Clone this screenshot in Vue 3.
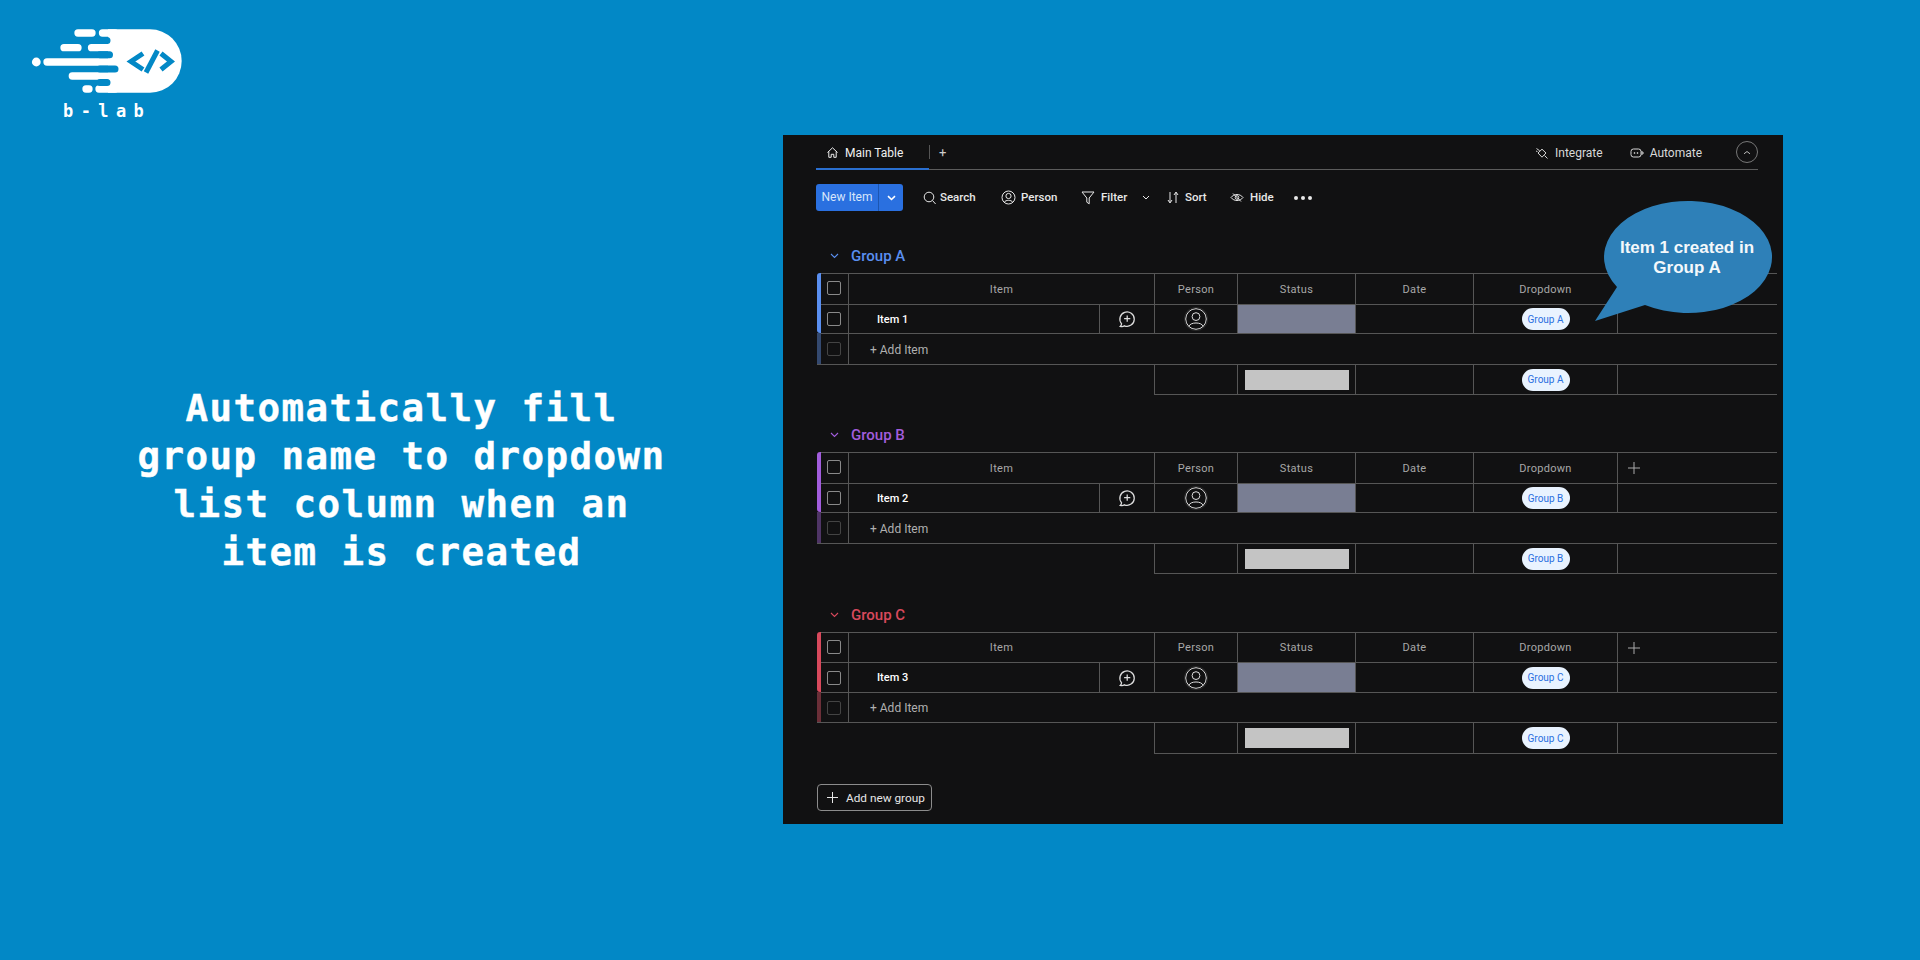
<script setup>
const groups = [
  { name: 'Group A', color: '#5a8ff0', dim: '#34496f', item: 'Item 1', showPlus: false, height: 179, rows: '31px 29px 31px 31px' },
  { name: 'Group B', color: '#a25ddc', dim: '#4f3566', item: 'Item 2', showPlus: true, height: 180, rows: '31px 29px 31px 31px' },
  { name: 'Group C', color: '#d8495c', dim: '#6b2f38', item: 'Item 3', showPlus: true, height: 179, rows: '30px 30px 30px 32px' },
]
const tools = [
  { label: 'Search', icon: 'search', width: 78, gap: 4 },
  { label: 'Person', icon: 'person', width: 80, gap: 5 },
  { label: 'Filter', icon: 'filter', width: 86, gap: 6 },
  { label: 'Sort', icon: 'sort', width: 63, gap: 6 },
  { label: 'Hide', icon: 'hide', width: 64, gap: 6 },
]
</script>

<template>
  <div class="page">
    <div class="left">
      <div class="logo">
        <svg class="logo-mark" width="190" height="100" viewBox="0 0 190 100">
          <path d="M108 29.3H150A31.7 31.7 0 0 1 150 92.7H108Z" fill="#fff" />
          <g stroke="#fff" stroke-width="7.3" stroke-linecap="round" fill="none">
            <path d="M78 33H92M102.5 33H115M64 47.7H78M91.5 47.7H112M47 62H115M72.3 76H115M86 89H89M99 89H115" />
          </g>
          <circle cx="36.3" cy="62" r="4.4" fill="#fff" />
          <g stroke="#0288c6" stroke-width="7" stroke-linecap="round" fill="none">
            <path d="M100 40.4H107M100 54.8H109.5M100 69H115M100 82.6H107" />
          </g>
          <g stroke="#0288c6" stroke-width="5" fill="none">
            <path d="M143 53.5L131 61.5L143 69.5M161 53.5L171 61.5L161 69.5" />
            <path d="M146 72.5L157.5 50.5" />
          </g>
        </svg>
        <div class="logo-text">b-lab</div>
      </div>
      <h1 class="headline">Automatically fill<br />group name to dropdown<br />list column when an<br />item is created</h1>
    </div>

    <div class="panel">
      <div class="tabs">
        <div class="tab">
          <svg class="ic" width="13" height="13" viewBox="0 0 13 13"><path d="M1.5 6.5L6.5 1.8L11.5 6.5M2.8 5.5V11.3H5.2V8.3H7.8V11.3H10.2V5.5" /></svg>
          <span>Main Table</span>
        </div>
        <span class="tab-sep"></span>
        <span class="tab-plus">+</span>
        <div class="tabs-right">
          <span class="tab-link">
            <svg class="ic" width="14" height="14" viewBox="0 0 14 14"><path d="M3 7L7 3.2L11 7L7 11.2ZM1.5 2.5L4.7 4.8M9.5 9.5L12.5 12.5M1 5L2.5 5.6" /></svg>
            Integrate
          </span>
          <span class="tab-link">
            <svg class="ic" width="15" height="14" viewBox="0 0 15 14"><rect x="2" y="3" width="10" height="8" rx="2.4" /><path d="M12 6H14V8H12" /><circle cx="5.5" cy="7" r=".5" /><circle cx="8.5" cy="7" r=".5" /></svg>
            Automate
          </span>
          <span class="collapse">
            <svg class="ic" width="8" height="5" viewBox="0 0 8 5"><path d="M1 3.8L4 1.5L7 3.8" /></svg>
          </span>
        </div>
      </div>

      <div class="toolbar">
        <div class="new-item">
          <span class="new-label">New Item</span>
          <span class="new-arrow">
            <svg width="9" height="6" viewBox="0 0 9 6"><path d="M1 1.2L4.5 4.5L8 1.2" fill="none" stroke="#fff" stroke-width="1.6" /></svg>
          </span>
        </div>
        <div class="tools">
          <div v-for="t in tools" :key="t.label" class="tool" :style="{ width: t.width + 'px', gap: t.gap + 'px' }">
            <svg v-if="t.icon === 'search'" class="ic" width="13" height="14" viewBox="0 0 13 14"><circle cx="6" cy="6" r="4.8" /><path d="M9.5 9.5L12.6 13" /></svg>
            <svg v-else-if="t.icon === 'person'" class="ic" width="15" height="15" viewBox="0 0 15 15"><circle cx="7.5" cy="7.5" r="6.5" /><circle cx="7.5" cy="6" r="2.6" /><path d="M3.5 12C4.5 9.8 10.5 9.8 11.5 12" /></svg>
            <svg v-else-if="t.icon === 'filter'" class="ic" width="14" height="14" viewBox="0 0 14 14"><path d="M1 1H13L8.2 7V12.8L5.8 11.2V7Z" /></svg>
            <svg v-else-if="t.icon === 'sort'" class="ic" width="12" height="13" viewBox="0 0 12 13"><path d="M3 1V11M1 9L3 12L5 9M9 12V2M7 4L9 1L11 4" /></svg>
            <svg v-else class="ic" width="14" height="13" viewBox="0 0 14 13"><path d="M1 6.5C4 2.5 10 2.5 13 6.5C10 10.5 4 10.5 1 6.5ZM3 2.5L11 10.5" /><circle cx="7" cy="6.5" r="1.8" /></svg>
            <span class="tool-label">{{ t.label }}</span>
            <svg v-if="t.icon === 'filter'" class="ic filter-chev" width="8" height="5" viewBox="0 0 8 5"><path d="M1 1L4 4L7 1" /></svg>
          </div>
          <div class="dots"><i></i><i></i><i></i></div>
        </div>
      </div>

      <section v-for="g in groups" :key="g.name" class="group" :style="{ height: g.height + 'px' }">
        <div class="group-head" :style="{ color: g.color }">
          <svg width="9" height="6" viewBox="0 0 9 6"><path d="M1 1L4.5 4.5L8 1" fill="none" stroke="currentColor" stroke-width="1.1" /></svg>
          <span>{{ g.name }}</span>
        </div>
        <div class="grid" :style="{ gridTemplateRows: g.rows }">
          <!-- header -->
          <div class="stripe stripe-top" :style="{ background: g.color }"></div>
          <div class="cell line"><span class="box box-up"></span></div>
          <div class="cell line lft head span-item">Item</div>
          <div class="cell line lft head">Person</div>
          <div class="cell line lft head">Status</div>
          <div class="cell line lft head">Date</div>
          <div class="cell line lft head">Dropdown</div>
          <div class="cell line lft head col-end"><span v-if="g.showPlus" class="col-plus">
            <svg class="ic" width="12" height="12" viewBox="0 0 12 12"><path d="M6 0V12M0 6H12" /></svg>
          </span></div>

          <!-- item -->
          <div class="stripe stripe-bottom" :style="{ background: g.color }"></div>
          <div class="cell line"><span class="box"></span></div>
          <div class="cell line lft item-name">{{ g.item }}</div>
          <div class="cell line lft">
            <svg class="ic comment" width="18" height="18" viewBox="0 0 18 18"><path d="M3.6 13.8A7.2 7.2 0 1 1 6.4 15.8C5.4 16.6 3.4 16.8 2.2 16.4C3.2 15.6 3.6 14.8 3.6 13.8Z" /><path d="M9.2 5.6V11.8M6.1 8.7H12.3" /></svg>
          </div>
          <div class="cell line lft">
            <span class="avatar-ring">
              <svg class="ic avatar" width="22" height="22" viewBox="0 0 22 22"><circle cx="11" cy="11" r="10.3" /><circle cx="11" cy="8.6" r="3.9" /><path d="M3.8 18.5C5 13.8 17 13.8 18.2 18.5" /></svg>
            </span>
          </div>
          <div class="cell line lft status"></div>
          <div class="cell line lft"></div>
          <div class="cell line lft"><span class="pill">{{ g.name }}</span></div>
          <div class="cell line lft"></div>

          <!-- add item -->
          <div class="stripe" :style="{ background: g.dim }"></div>
          <div class="cell line"><span class="box box-dim"></span></div>
          <div class="cell line lft add-item">+ Add Item</div>

          <!-- summary -->
          <div class="cell line sum-spacer"></div>
          <div class="cell line lft sum"></div>
          <div class="cell line lft sum"><span class="sum-box"></span></div>
          <div class="cell line lft sum"></div>
          <div class="cell line lft sum"><span class="pill">{{ g.name }}</span></div>
          <div class="cell line lft sum"></div>
        </div>
      </section>

      <button class="add-group">
        <svg class="ic" width="11" height="11" viewBox="0 0 11 11"><path d="M5.5 0V11M0 5.5H11" /></svg>
        <span>Add new group</span>
      </button>

      <div class="bubble">
        <svg width="186" height="166" viewBox="0 0 186 166">
          <path d="M23 122.9A84 56 0 1 1 51 141.1L1 157Z" fill="#2e80b8" />
        </svg>
        <div class="bubble-text">Item 1 created in<br />Group A</div>
      </div>
    </div>
  </div>
</template>

<style>
html, body { margin: 0; padding: 0; background: #0288c6; }
</style>

<style scoped>
.page {
  width: 1920px;
  height: 960px;
  display: flex;
  background: #0288c6;
  overflow: hidden;
}
.left {
  width: 783px;
  flex: none;
  display: flex;
  flex-direction: column;
  padding-left: 20px;
  box-sizing: border-box;
}
.logo { height: 384px; position: relative; }
.logo-mark { display: block; margin-left: -20px; }
.logo-text {
  font-family: "DejaVu Sans Mono", monospace;
  font-weight: 700;
  font-size: 17px;
  letter-spacing: 7.4px;
  color: #fff;
  line-height: 20px;
  margin-left: 43px;
  margin-top: 1px;
}
.headline {
  margin: 0;
  color: #fff;
  font-family: "DejaVu Sans Mono", monospace;
  font-weight: 700;
  font-size: 37.5px;
  letter-spacing: 1.42px;
  line-height: 48px;
  text-align: center;
  -webkit-text-stroke: .4px #fff;
}
.panel {
  position: relative;
  margin-top: 135px;
  width: 1000px;
  height: 689px;
  padding: 0 6px 0 33px;
  box-sizing: border-box;
  background: #111112;
  font-family: Roboto, sans-serif;
  color: #e6e6e6;
}
.ic { fill: none; stroke: currentColor; stroke-width: 1; flex: none; display: block; }
.tabs {
  height: 35px;
  width: 942px;
  box-sizing: border-box;
  border-bottom: 1px solid #5c5c5c;
  display: flex;
  align-items: center;
  font-size: 12px;
}
.tab {
  width: 113px;
  height: 35px;
  box-sizing: border-box;
  border-bottom: 2px solid #2a6fd0;
  margin-bottom: -1px;
  padding: 2px 0 0 10px;
  display: flex;
  align-items: center;
  gap: 6px;
  color: #f0f0f0;
}
.tab-sep { width: 1px; height: 14px; background: #555; }
.tab-plus { margin-left: 9px; color: #ccc; font-size: 13px; }
.tabs-right { margin-left: auto; display: flex; align-items: center; }
.tab-link { display: flex; align-items: center; gap: 6px; color: #d8d8d8; margin-right: 26px; padding-top: 1px; }
.tab-link:nth-child(2) { margin-right: 34px; }
.collapse {
  width: 22px;
  height: 22px;
  box-sizing: border-box;
  border: 1px solid #777;
  border-radius: 50%;
  display: flex;
  align-items: center;
  justify-content: center;
  color: #bbb;
}
.toolbar {
  margin-top: 14px;
  height: 27px;
  display: flex;
  align-items: center;
}
.new-item {
  width: 87px;
  height: 27px;
  display: flex;
  background: #2a70e0;
  border-radius: 3px;
  color: #d8e6fb;
  font-size: 12px;
}
.new-label { width: 63px; display: flex; align-items: center; justify-content: center; border-right: 1px solid #1c56b0; box-sizing: border-box; padding-bottom: 1px; }
.new-arrow { flex: 1; display: flex; align-items: center; justify-content: center; }
.tools { display: flex; align-items: center; margin-left: 20px; }
.tool {
  display: flex;
  align-items: center;
  font-size: 11.5px;
  font-weight: 500;
  color: #e8e8e8;
}
.tool-label { padding-bottom: 1px; }
.filter-chev { margin-left: 9px; }
.dots { display: flex; gap: 3px; }
.dots i { width: 4px; height: 4px; border-radius: 50%; background: #e8e8e8; display: block; }
.group:first-of-type { margin-top: 29px; }
.group-head {
  height: 33px;
  padding: 0 0 1px 14px;
  box-sizing: border-box;
  display: flex;
  align-items: center;
  gap: 12px;
  font-size: 15px;
  font-weight: 500;
}
.grid {
  margin-left: 1px;
  display: grid;
  grid-template-columns: 4px 27px 251px 55px 83px 118px 118px 144px 160px;
}
.stripe { background: #555; }
.stripe-top { border-radius: 3px 0 0 0; }
.stripe-bottom { border-radius: 0 0 0 3px; }
.cell {
  box-sizing: border-box;
  display: flex;
  align-items: center;
  justify-content: center;
  min-width: 0;
}
.line { border-top: 1px solid #565656; }
.lft { border-left: 1px solid #565656; }
.box {
  width: 14px;
  height: 14px;
  box-sizing: border-box;
  border: 1px solid #8a8a8a;
  border-radius: 2px;
  margin-right: 1px;
}
.box-up { margin-bottom: 2px; }
.box-dim { border-color: #444; }
.head { font-size: 11px; color: #a8a8a8; letter-spacing: .3px; }
.span-item { grid-column: span 2; }
.col-end { justify-content: flex-start; padding-left: 10px; }
.item-name {
  justify-content: flex-start;
  padding-left: 28px;
  font-size: 11px;
  font-weight: 500;
  color: #fff;
}
.comment { stroke-width: 1.25; color: #dedede; }
.avatar-ring {
  width: 24px;
  height: 24px;
  border-radius: 50%;
  background: #2a2a2a;
  display: flex;
  align-items: center;
  justify-content: center;
}
.avatar { color: #dcdcdc; background: #111112; border-radius: 50%; }
.status { background: #797e93; }
.pill {
  width: 48px;
  height: 22px;
  border-radius: 11px;
  background: #e9f3ff;
  color: #2a70e0;
  font-size: 10px;
  display: flex;
  align-items: center;
  justify-content: center;
}
.add-item {
  grid-column: span 7;
  justify-content: flex-start;
  padding: 1px 0 0 21px;
  font-size: 12px;
  color: #b0b0b0;
}
.sum-spacer { grid-column: span 4; }
.sum { border-bottom: 1px solid #565656; }
.sum-box { width: 104px; height: 20px; background: #c4c4c4; }
.col-plus { color: #aaa; }
.add-group {
  margin: 6px 0 0 1px;
  width: 115px;
  height: 27px;
  box-sizing: border-box;
  padding: 0 0 0 9px;
  display: flex;
  align-items: center;
  gap: 8px;
  background: none;
  border: 1px solid #8c8c8c;
  border-radius: 4px;
  color: #e6e6e6;
  font-family: Roboto, sans-serif;
  font-size: 11.8px;
}
.bubble {
  position: absolute;
  left: 811px;
  top: 29px;
  width: 186px;
  height: 166px;
}
.bubble svg { display: block; }
.bubble-text {
  position: absolute;
  left: 0;
  right: 0;
  top: 74px;
  text-align: center;
  font-family: "Liberation Sans", sans-serif;
  font-weight: 700;
  font-size: 17px;
  line-height: 20px;
  color: #f4f8fb;
}
</style>
